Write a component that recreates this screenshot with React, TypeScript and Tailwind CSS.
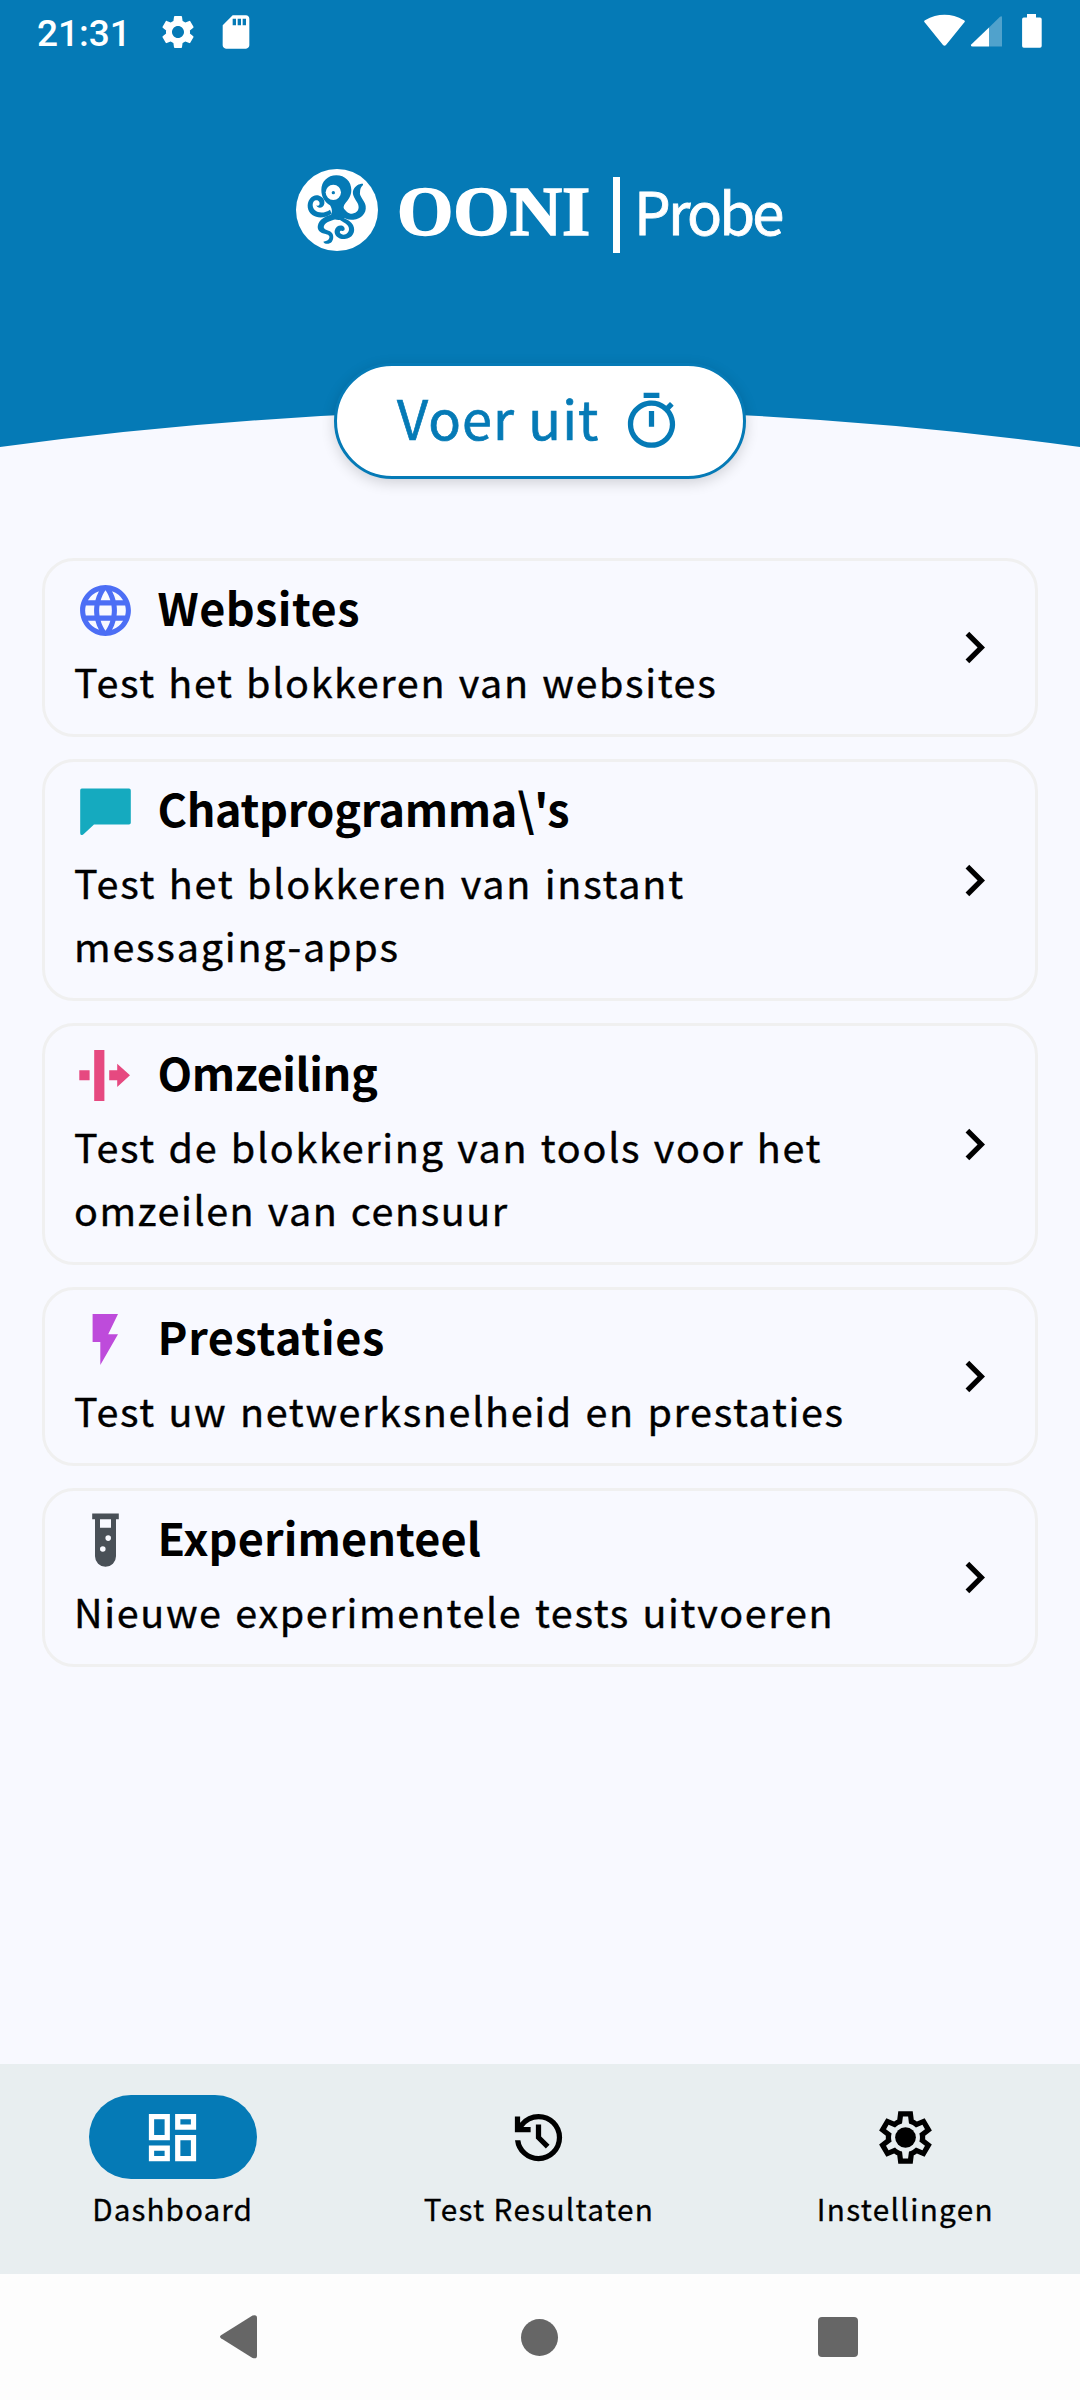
import type { ReactNode } from "react";
import { MdChevronRight, MdLanguage, MdOutlineDashboard, MdOutlineTimer, MdSdCard, MdSettings } from "react-icons/md";

type Line = { text: string; spacing: string };

type TestGroup = {
  title: string;
  titleSpacing: string;
  lines: Line[];
  icon: ReactNode;
};

const groups: TestGroup[] = [
  {
    title: "Websites",
    titleSpacing: "tracking-[0.5px]",
    lines: [{ text: "Test het blokkeren van websites", spacing: "tracking-[1.66px]" }],
    icon: <MdLanguage className="size-[63px] p-[1px] text-[#4c6ef5]" />,
  },
  {
    title: "Chatprogramma\\'s",
    titleSpacing: "tracking-[-0.37px]",
    lines: [
      { text: "Test het blokkeren van instant", spacing: "tracking-[1.77px]" },
      { text: "messaging-apps", spacing: "tracking-[1.8px]" },
    ],
    icon: (
      <svg viewBox="0 0 63 63" className="size-[63px] fill-[#15aabf]">
        <path d="M7.800 8.600H55Q56.800 8.600 56.800 10.400V42.700Q56.800 44.500 55 44.500H20L9.500 54.200Q6.200 56.400 6.200 53V10.200Q6.200 8.600 7.800 8.600Z" />
      </svg>
    ),
  },
  {
    title: "Omzeiling",
    titleSpacing: "tracking-[-0.45px]",
    lines: [
      { text: "Test de blokkering van tools voor het", spacing: "tracking-[1.7px]" },
      { text: "omzeilen van censuur", spacing: "tracking-[1.56px]" },
    ],
    icon: (
      <svg viewBox="0 0 63 63" className="size-[63px] fill-[#e64980]">
        <path d="M5.3 26.3h10.3v10H5.3zM20.2 6h10.2v51H20.2zM35.2 26.3h8v-6.6L56 31.3 43.2 43v-6.700h-8z" />
      </svg>
    ),
  },
  {
    title: "Prestaties",
    titleSpacing: "tracking-[0.62px]",
    lines: [{ text: "Test uw netwerksnelheid en prestaties", spacing: "tracking-[1.68px]" }],
    icon: (
      <svg viewBox="0 0 63 63" className="size-[63px] fill-[#be4bdb]">
        <path d="M18.6 6H44L34.2 26.3H44L26.3 57V34H18.6z" />
      </svg>
    ),
  },
  {
    title: "Experimenteel",
    titleSpacing: "tracking-[0.1px]",
    lines: [{ text: "Nieuwe experimentele tests uitvoeren", spacing: "tracking-[1.66px]" }],
    icon: (
      <svg viewBox="0 0 63 63" className="size-[63px] fill-[#495057]">
        <path
          fillRule="evenodd"
          d="M18.2 4.6h26.6v5.7H42v37a10.5 10.5 0 0 1-21 0v-37h-2.8zM26 10.3h11v8.4H26zM34.2 26.3a2.8 2.8 0 1 0 0 5.6 2.8 2.8 0 0 0 0-5.6zM28.8 37.2a2.8 2.8 0 1 0 0 5.6 2.8 2.8 0 0 0 0-5.6z"
        />
      </svg>
    ),
  },
];

function StatusBar() {
  return (
    <div className="flex h-[63px] items-center text-white">
      <span className="mt-[4px] ml-[37px] w-[100px] font-[Roboto,sans-serif] text-[37px] leading-[44px] font-medium">21:31</span>
      <MdSettings className="ml-[21px] size-[40px]" />
      <MdSdCard className="ml-[18px] size-[40px]" />
      <svg viewBox="0 0 120 36" className="mr-[37px] ml-auto h-[36px] w-[120px] fill-white">
        <path d="M1.800 8.600Q0.400 7.200 2 6.200Q21.500 -4.600 41 6.200Q42.600 7.200 41.200 8.600L23 31Q21.500 32.600 20 31Z" />
        <path d="M66 13.500L77 2.800Q79 1.200 79 3.500V32.500H66Z" fillOpacity=".3" />
        <path d="M66 13.500V32.500H49.500Q47 32.500 48.500 30.300Z" />
        <path d="M104 0h9v3.500h4q1.700 0 1.700 1.700v26.800q0 1.700-1.700 1.700h-16.200q-1.700 0-1.700-1.700V5.200q0-1.700 1.700-1.700h3.200z" />
      </svg>
    </div>
  );
}

function Octopus() {
  return (
    <svg viewBox="48 56 246 246" className="size-[82px] shrink-0">
      <circle cx="171" cy="179" r="123" fill="#fff" />
      <g fill="#057ab6">
        <path d="M169 75C195 75 214 94 214 119C214 137 204 149 196 159C190 167 190 172 192 181L196 200C188 212 166 212 150 200C157 190 158 176 150 165C134 155 124 139 124 119C124 94 143 75 169 75Z" />
        <path d="M249 100C239 99 226 105 220 119C214 134 228 148 234 161C240 177 231 189 216 190C204 190 197 182 190 172L181 193C192 204 205 210 220 208C244 206 260 189 257 167C254 150 237 138 240 126C240 116 243 109 249 104Z" />
        <path d="M122 139C113 131 98 134 90 145C78 161 82 183 97 194C113 205 137 203 155 190L150 178C137 188 116 190 105 180C95 170 96 153 107 150C116 148 121 157 118 163C116 167 111 167 109 165C112 175 130 175 133 160C135 149 129 141 119 137Z" />
        <path d="M165 191C154 190 123 201 115 220C108 239 121 248 137 251C149 254 150 259 147 265C144 271 137 272 130 274C134 283 149 282 155 275C163 265 161 249 150 243C139 238 128 236 132 226C138 212 158 212 174 202Z" />
        <path d="M176 192C190 207 209 207 219 224C229 244 217 265 194 266C174 267 162 254 164 241C167 226 184 221 192 230C197 237 192 244 185 241C179 240 177 247 184 251C194 257 207 248 207 236C207 222 188 216 173 204Z" />
      </g>
      <circle cx="160" cy="126" r="23" fill="#fff" />
      <circle cx="160" cy="127" r="5" fill="#057ab6" />
    </svg>
  );
}

function Header() {
  return (
    <header className="relative h-[479px]">
      <svg viewBox="0 0 1080 447" className="absolute top-0 left-0 h-[447px] w-full fill-[#057ab6]">
        <path d="M0 0H1080V447Q540 373 0 447Z" />
      </svg>
      <div className="relative flex h-full flex-col">
        <StatusBar />
        <div className="mt-[105.500px] flex h-[82px] items-center pl-[296px] text-white">
          <Octopus />
          <span className="mt-[4px] ml-[19px] w-[195px] origin-left scale-x-[1.05] font-['Liberation_Serif',serif] text-[69px] leading-[76px] font-bold [-webkit-text-stroke:1.500px_white]">OONI</span>
          <span className="mt-[10px] ml-[21px] h-[76px] w-[7px] bg-white" />
          <span className="ml-[14px] text-[58px] leading-[80px] tracking-[-2.8px] [-webkit-text-stroke:0.800px_white]">Probe</span>
        </div>
        <button className="mx-auto mt-auto flex h-[116px] w-[412px] items-center rounded-full border-[3px] border-[#057ab6] bg-white pl-[60px] text-[#057ab6] shadow-[0_4px_14px_rgba(0,0,0,0.16)]">
          <span className="-mt-[8px] w-[223px] text-left text-[54px] leading-[80px] tracking-[1.09px] [-webkit-text-stroke:0.700px_#057ab6]">Voer uit</span>
          <MdOutlineTimer className="size-[63px]" />
        </button>
      </div>
    </header>
  );
}

function GroupCard({ group }: { group: TestGroup }) {
  return (
    <article className="flex items-center rounded-[32px] border-[3px] border-[#f0f0f0] px-[29px] pt-[18px] pb-[22px]">
      <div className="flex-1">
        <div className="flex h-[63px] items-start gap-[20.500px]">
          {group.icon}
          <h2 className={`text-[45px] leading-[56px] font-bold ${group.titleSpacing}`}>{group.title}</h2>
        </div>
        <div className="mt-[7px]">
          {group.lines.map((line) => (
            <p key={line.text} className={`text-[39.5px] leading-[63px] whitespace-nowrap [word-spacing:2px] [-webkit-text-stroke:0.400px_black] ${line.spacing}`}>
              {line.text}
            </p>
          ))}
        </div>
      </div>
      <MdChevronRight className="mt-[4px] size-[63px] shrink-0" />
    </article>
  );
}

function HistoryIcon() {
  return (
    <svg viewBox="0 -960 960 960" className="size-[63px] fill-black">
      <path d="M480-120q-138 0-240.500-91.500T122-440h82q14 104 92.500 172T480-200q117 0 198.500-81.500T760-480q0-117-81.500-198.500T480-760q-69 0-129 32t-101 88h110v80H120v-240h80v94q51-64 124.500-99T480-840q75 0 140.500 28.500t114 77q48.500 48.500 77 114T840-480q0 75-28.500 140.500t-77 114q-48.500 48.500-114 77T480-120Zm112-192L440-464v-216h80v184l128 128-56 56Z" />
    </svg>
  );
}

function GearIcon() {
  return (
    <svg viewBox="0 -960 960 960" className="size-[63px] fill-black">
      <path d="m370-80-16-128q-13-5-24.500-12T307-235l-119 50L78-375l103-78q-1-7-1-13.500v-27q0-6.500 1-13.500L78-585l110-190 119 50q11-8 23-15t24-12l16-128h220l16 128q13 5 24.500 12t22.500 15l119-50 110 190-103 78q1 7 1 13.500v27q0 6.500-2 13.500l103 78-110 190-118-50q-11 8-23 15t-24 12L590-80H370Zm70-80h79l14-106q31-8 57.500-23.500T639-327l99 41 39-68-86-65q5-14 7-29.500t2-31.500q0-16-2-31.500t-7-29.500l86-65-39-68-99 42q-22-23-48.500-38.500T533-694l-13-106h-79l-14 106q-31 8-57.500 23.500T321-633l-99-41-39 68 86 64q-5 15-7 30t-2 32q0 16 2 31t7 30l-86 65 39 68 99-42q22 23 48.500 38.500T427-266l13 106Z" />
      <circle cx="480" cy="-480" r="158" />
    </svg>
  );
}

function NavItem({ icon, label, spacing, active }: { icon: ReactNode; label: string; spacing: string; active?: boolean }) {
  return (
    <div className="flex flex-1 flex-col items-center pt-[31px]">
      <div className={`flex h-[84px] w-[168px] items-center justify-center rounded-full ${active ? "bg-[#057ab6] text-white" : ""}`}>{icon}</div>
      <span className={`mt-[8px] text-[29.7px] leading-[44px] whitespace-nowrap [-webkit-text-stroke:0.300px_black] ${spacing}`}>{label}</span>
    </div>
  );
}

export default function App() {
  return (
    <div className="flex h-[2400px] w-[1080px] flex-col bg-[#f8f9ff] font-['Noto_Sans_CJK_SC',sans-serif] text-black">
      <Header />
      <main className="mt-[79px] flex flex-1 flex-col gap-[22px] px-[42px]">
        {groups.map((group) => (
          <GroupCard key={group.title} group={group} />
        ))}
      </main>
      <nav className="flex h-[210px] gap-[21px] bg-[#e8eef0] pr-[2px]">
        <NavItem active label="Dashboard" spacing="tracking-[1.07px]" icon={<MdOutlineDashboard className="size-[63px]" />} />
        <NavItem label="Test Resultaten" spacing="tracking-[1.33px]" icon={<HistoryIcon />} />
        <NavItem label="Instellingen" spacing="tracking-[1.33px]" icon={<GearIcon />} />
      </nav>
      <div className="flex h-[126px] items-center bg-[#fdfdfd] pl-[220px]">
        <svg viewBox="0 0 37 44" className="h-[44px] w-[37px] fill-[#666]">
          <path d="M1 20.300L32.500 .6Q37 -1 37 3V40.500Q37 44.500 32.500 42.900L1 23.300Q-1 21.800 1 20.300Z" />
        </svg>
        <div className="ml-[264px] size-[37px] rounded-full bg-[#666]" />
        <div className="ml-[260px] size-[40px] rounded-[4px] bg-[#666]" />
      </div>
    </div>
  );
}
